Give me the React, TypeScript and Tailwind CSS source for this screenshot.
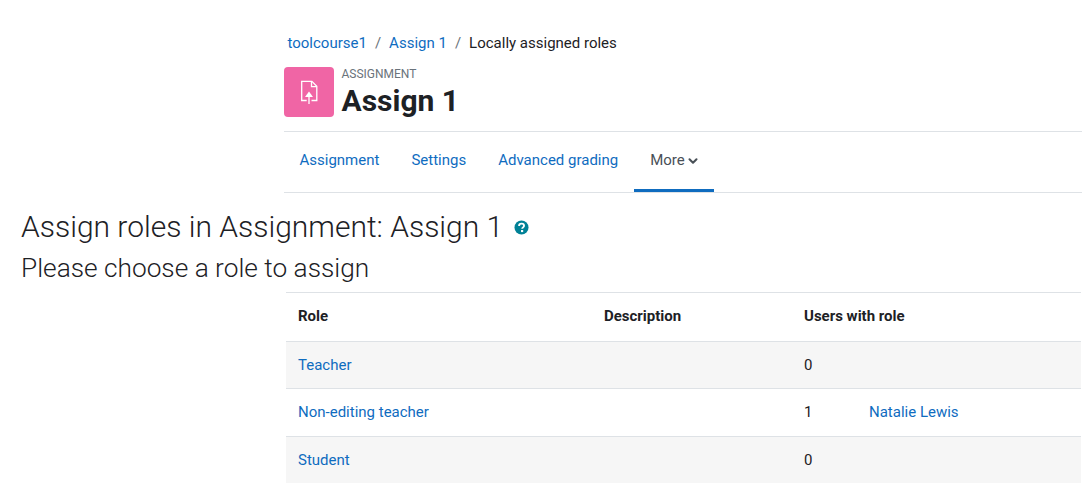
import { ChevronDown } from "lucide-react";

const rows = [
  { role: "Teacher", count: "0", user: "", shaded: true },
  { role: "Non-editing teacher", count: "1", user: "Natalie Lewis", shaded: false },
  { role: "Student", count: "0", user: "", shaded: true },
];

const tabs = ["Assignment", "Settings", "Advanced grading"];

function AssignIcon() {
  return (
    <svg width="24" height="24" viewBox="0 0 24 24" fill="none" stroke="#fff" strokeWidth="1.3">
      <path d="M14.500 20.500h5.300V6.200l-4.900-4.900H4.700v19.200h5" />
      <path d="M14.500 1.500v5.200h5.300" />
      <path d="M12 24v-9" />
      <path d="M8 17l4-5.500 4 5.500z" fill="#fff" stroke="none" />
    </svg>
  );
}

export default function App() {
  return (
    <div className="h-[488px] w-[1082px] overflow-hidden bg-white font-['Roboto',sans-serif] text-[15px] leading-[22.5px] text-[#1d2125]">
      {/* 헤더 */}
      <div className="ml-[283.500px] pt-[32px]">
        <nav className="flex items-center pl-[4px]">
          <a className="text-[#0f6cbf]">toolcourse1</a>
          <span className="px-[8px] text-[#6a737b]">/</span>
          <a className="text-[#0f6cbf]">Assign 1</a>
          <span className="px-[8px] text-[#6a737b]">/</span>
          <span>Locally assigned roles</span>
        </nav>
        <div className="mt-[12px] flex h-[50px] items-start">
          <div className="flex h-[50px] w-[50px] items-center justify-center rounded-[4px] bg-[#f065a5]">
            <AssignIcon />
          </div>
          <div className="ml-[8px]">
            <div className="mt-[-2px] text-[12px] leading-[18px] text-[#6a737b]">ASSIGNMENT</div>
            <h1 className="text-[30px] leading-[36px] font-bold">Assign 1</h1>
          </div>
        </div>
        <div className="mt-[14px] flex h-[62px] border-y border-[#dee2e6]">
          {tabs.map((tab) => (
            <a key={tab} className="flex items-center px-[16px] pb-[2px] text-[#0f6cbf]">
              {tab}
            </a>
          ))}
          <a className="flex items-center border-b-[3px] border-[#0f6cbf] px-[16px] text-[#495057]">
            More
            <ChevronDown size={14} strokeWidth={3.5} className="mt-[2px] ml-[1px] -mr-[2px]" />
          </a>
        </div>
      </div>

      {/* 제목 */}
      <div className="flex items-center pl-[21px] pt-[14px]">
        <h2 className="text-[30px] leading-[40px] font-light">Assign roles in Assignment: Assign 1</h2>
        <svg className="ml-[10.500px] mt-[1px]" width="15" height="15" viewBox="0 0 16 16">
          <circle cx="8" cy="8" r="7.500" fill="#008196" />
          <path d="M5.400 6.300c0-1.600 1.200-2.500 2.700-2.500s2.600.9 2.600 2.300c0 1.800-2 1.700-2 3.300" fill="none" stroke="#fff" strokeWidth="2" />
          <rect x="7.500" y="10.700" width="2.300" height="2.200" fill="#fff" />
        </svg>
      </div>
      <h3 className="mt-[3px] pl-[21px] text-[26.250px] leading-[36px] font-light">Please choose a role to assign</h3>

      {/* 역할 목록 */}
      <div className="ml-[286px] mt-[6px] w-[795px]">
        <div className="grid h-[49px] grid-cols-[306px_200px_1fr] items-center border-t border-[#dee2e6] px-[12px] font-bold">
          <span>Role</span>
          <span>Description</span>
          <span>Users with role</span>
        </div>
        {rows.map((row) => (
          <div
            key={row.role}
            className={`grid h-[47.500px] grid-cols-[306px_200px_65px_1fr] items-center border-t border-[#dee2e6] px-[12px] first:border-t-2 ${
              row.shaded ? "bg-[#f6f6f6]" : "bg-white"
            }`}
          >
            <a className="text-[#0f6cbf]">{row.role}</a>
            <span />
            <span>{row.count}</span>
            <a className="text-[#0f6cbf]">{row.user}</a>
          </div>
        ))}
      </div>
    </div>
  );
}
